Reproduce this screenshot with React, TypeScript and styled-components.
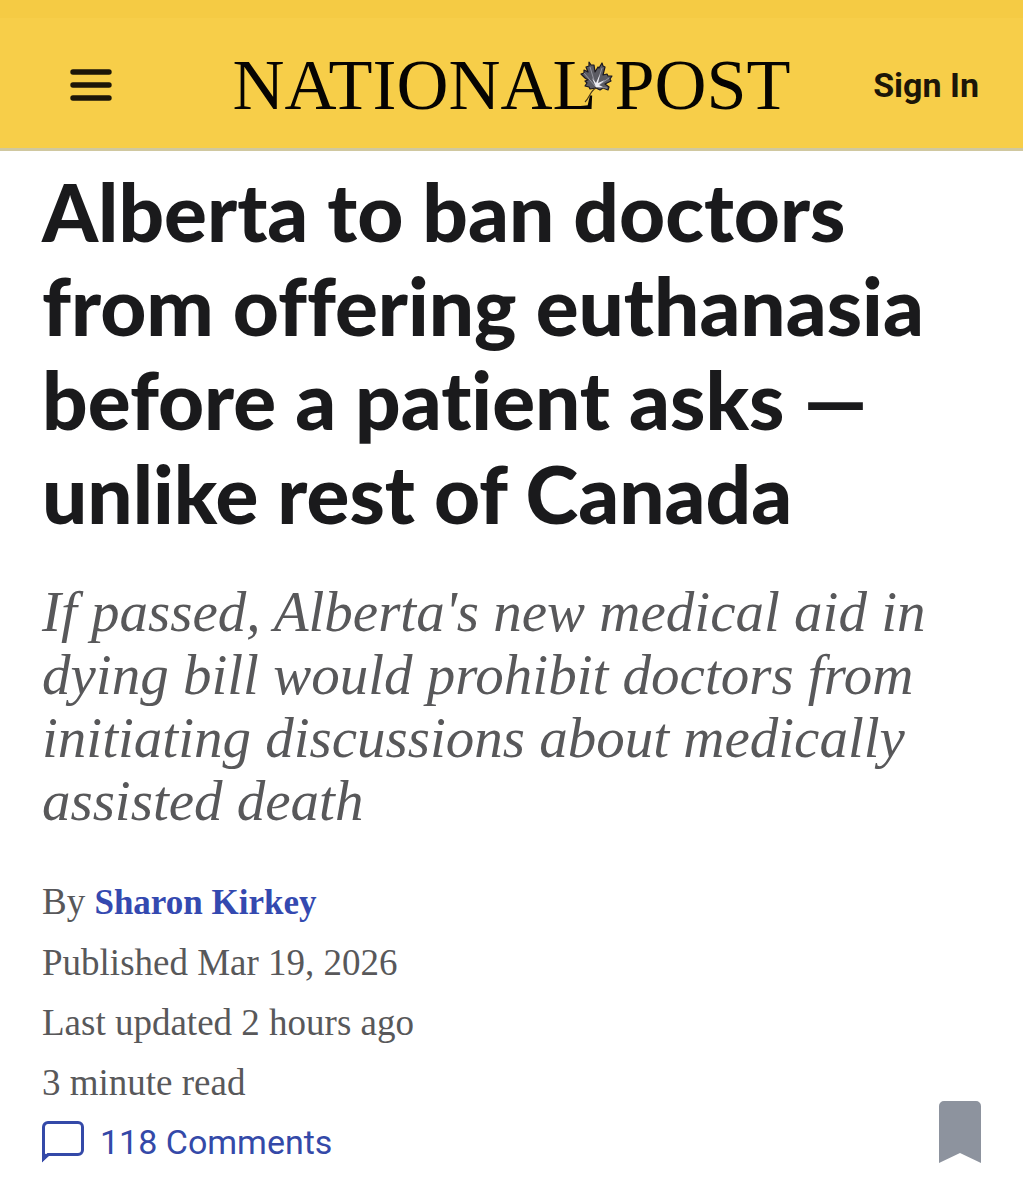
import React from "react";
import styled, { createGlobalStyle } from "styled-components";

const GlobalStyle = createGlobalStyle`
  *, *::before, *::after { box-sizing: border-box; }
  body { margin: 0; background: #ffffff; color: #1a1a1c; }
`;

const sans = `Roboto, "Liberation Sans", sans-serif`;
const serif = `"Liberation Serif", serif`;

const Header = styled.header`
  display: grid;
  grid-template-columns: 1fr auto 1fr;
  align-items: center;
  padding: 22px 44px 0;
  height: 151px;
  background: linear-gradient(#f5cb44 0 18px, #f7ce49 18px);
  border-bottom: 3px solid #d0c8a0;
`;

const MenuButton = styled.button`
  justify-self: start;
  display: flex;
  padding: 0 26px;
  border: 0;
  background: none;
  color: #1c1608;
  cursor: pointer;
`;

const Wordmark = styled.a`
  display: flex;
  align-items: center;
  font: 400 72px/88px ${serif};
  color: #060402;
  text-decoration: none;
  white-space: nowrap;
`;

const LeafSlot = styled.span`
  position: relative;
  width: 18px;
  height: 88px;
`;

const Leaf = styled.svg`
  position: absolute;
  top: 20px;
  left: -16px;
`;

const SignIn = styled.a`
  justify-self: end;
  font: 700 34px/40px ${sans};
  color: #1c1608;
  text-decoration: none;
`;

const Article = styled.main`
  padding: 13px 42px 36px;
`;

const Headline = styled.h1`
  margin: 0;
  font: 900 80px/94px Lato, sans-serif;
  font-variant-ligatures: none;
  color: #1a1a1c;
`;

const Deck = styled.p`
  margin: 40px 0;
  font: italic 400 57px/63px ${serif};
  color: #58585a;
`;

const Footer = styled.footer`
  display: flex;
  justify-content: space-between;
  align-items: flex-end;
`;

const MetaLine = styled.p`
  margin: 0;
  font: 400 37px/60px ${serif};
  color: #58585a;
`;

const Author = styled.a`
  font-size: 35px;
  font-weight: 700;
  color: #3449b0;
  text-decoration: none;
`;

const Comments = styled.a`
  display: flex;
  align-items: center;
  gap: 16px;
  margin-top: 8px;
  font: 400 34px/42px ${sans};
  color: #3449a8;
  text-decoration: none;
`;

const BookmarkButton = styled.button`
  display: flex;
  padding: 0;
  border: 0;
  background: none;
  color: #8d939e;
  cursor: pointer;
`;

const MenuIcon = () => (
  <svg width="42" height="32" viewBox="0 0 42 32" stroke="currentColor" strokeWidth="5.4" strokeLinecap="round" aria-hidden="true">
    <path d="M3 3h36M3 16h36M3 29h36" />
  </svg>
);

const MapleLeaf = () => (
  <Leaf width="34" height="42" viewBox="0 0 34 42" aria-hidden="true">
    <path
      d="M9 1L11 4L14 4L15 11L18 6L19 7L22 2L23 5L25 6L23 14L27 13L28 15L32 15L30 18L31 20L25 23L29 26L28 29L23 27L20 29L16 27L10 28L9 26L5 25L7 22L5 20L8 19L5 17L1 13L4 12L4 9L8 11L6 6L9 5Z"
      fill="#5b5b63"
      stroke="#1b1820"
      strokeWidth="1.2"
      strokeLinejoin="round"
    />
    <path d="M16 26L10 6M16 26L22 7M16 26L29 17M16 26L4 12M16 26L27 27" stroke="#a4a4ae" strokeWidth="0.8" />
    <path d="M16 26L12 17L16 22L20 13L18 22L25 19L19 24L23 26Z" fill="#ececf2" />
    <path d="M16 27c-6 3-6 9-11 14" stroke="#46361a" strokeWidth="1.1" fill="none" />
  </Leaf>
);

const CommentIcon = () => (
  <svg width="42" height="42" viewBox="0 0 42 42" fill="none" aria-hidden="true">
    <path d="M1.500 38V6a4.500 4.500 0 0 1 4.500-4.500h30a4.500 4.500 0 0 1 4.500 4.500v23a4.500 4.500 0 0 1-4.500 4.500H6z" stroke="currentColor" strokeWidth="3" />
    <path d="M0 32v9l8-7z" fill="currentColor" />
  </svg>
);

const BookmarkIcon = () => (
  <svg width="42" height="62" viewBox="0 0 42 62" fill="currentColor" aria-hidden="true">
    <path d="M0 62V5a5 5 0 0 1 5-5h32a5 5 0 0 1 5 5v57L21 52z" />
  </svg>
);

export default function App() {
  return (
    <>
      <GlobalStyle />
      <Header>
        <MenuButton type="button" aria-label="Menu">
          <MenuIcon />
        </MenuButton>
        <Wordmark href="#">
          NATIONAL
          <LeafSlot>
            <MapleLeaf />
          </LeafSlot>
          POST
        </Wordmark>
        <SignIn href="#">Sign In</SignIn>
      </Header>
      <Article>
        <Headline>Alberta to ban doctors from offering euthanasia before a patient asks — unlike rest of Canada</Headline>
        <Deck>
          If passed, Alberta's new medical aid in dying bill would prohibit doctors from initiating discussions about
          medically assisted death
        </Deck>
        <Footer>
          <div>
            <MetaLine>
              By <Author href="#">Sharon Kirkey</Author>
            </MetaLine>
            <MetaLine>Published Mar 19, 2026</MetaLine>
            <MetaLine>Last updated 2 hours ago</MetaLine>
            <MetaLine>3 minute read</MetaLine>
            <Comments href="#">
              <CommentIcon />
              118 Comments
            </Comments>
          </div>
          <BookmarkButton type="button" aria-label="Save article">
            <BookmarkIcon />
          </BookmarkButton>
        </Footer>
      </Article>
    </>
  );
}
